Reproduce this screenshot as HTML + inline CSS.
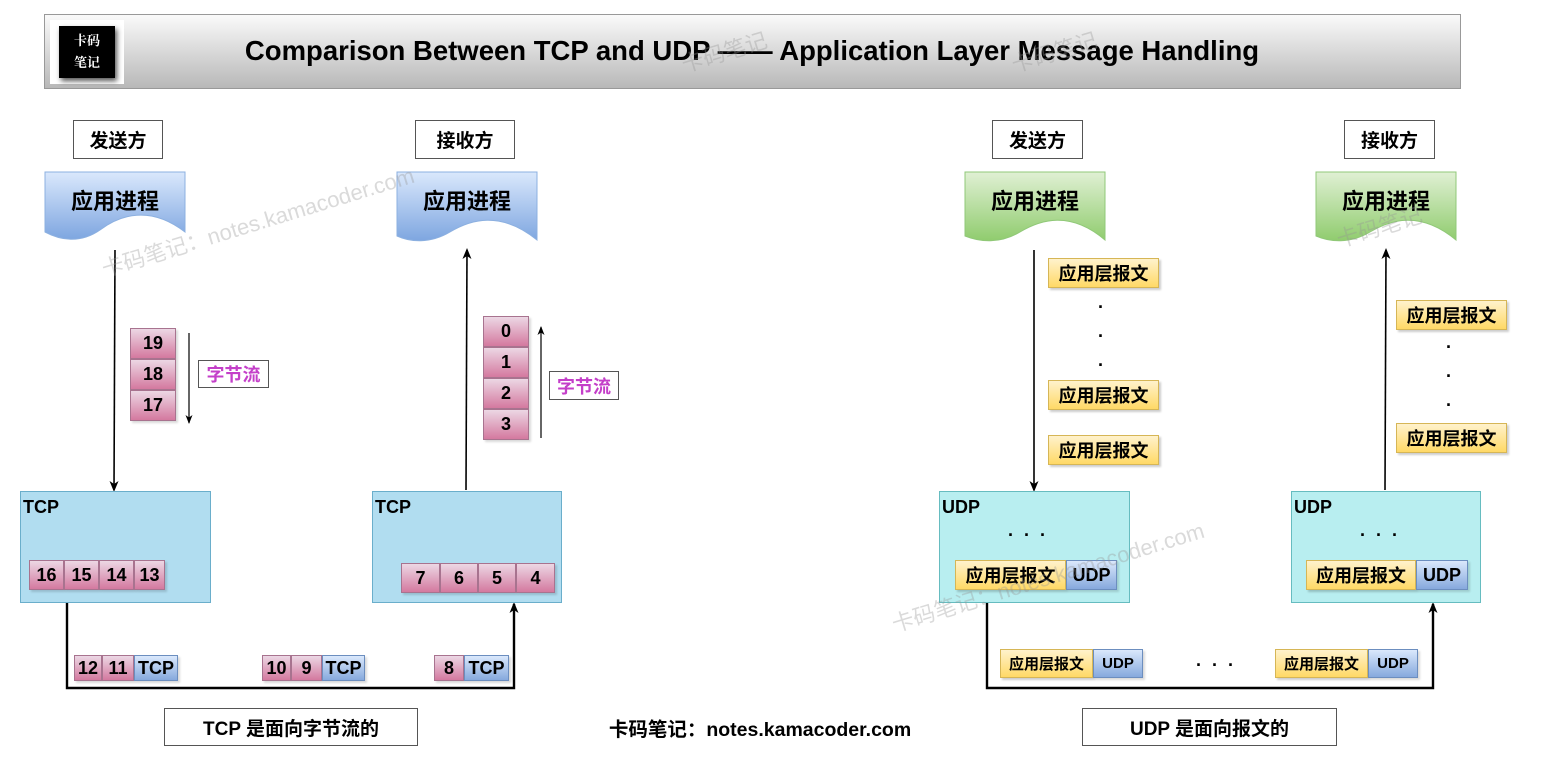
<!DOCTYPE html>
<html><head><meta charset="utf-8">
<style>
*{margin:0;padding:0;box-sizing:border-box}
body{width:1543px;height:761px;background:#fff;position:relative;overflow:hidden;font-family:"Liberation Sans","Noto Sans CJK SC",sans-serif;font-weight:bold;color:#000}
.a{position:absolute}
.lbl{position:absolute;border:1px solid #555;background:#fff;font-size:19px;display:flex;align-items:center;justify-content:center}
.c{position:absolute;display:flex;align-items:center;justify-content:center;font-size:18px}
.pk{background:linear-gradient(#ecd7e4,#d4799f);border:1px solid #a8738f;box-shadow:2px 2px 2px rgba(0,0,0,.15)}
.bl{background:linear-gradient(#dae8fc,#86a9dd);border:1px solid #6c8ebf;box-shadow:2px 2px 2px rgba(0,0,0,.15)}
.ye{background:linear-gradient(#fff2cc,#ffd966);border:1px solid #d6b656;box-shadow:2px 2px 2px rgba(0,0,0,.2)}
.tcp{position:absolute;background:#b1ddf0;border:1px solid #6aaecb}
.udp{position:absolute;background:#b8eef0;border:1px solid #66bcc0}
.box{font-size:18px;padding:5px 0 0 2px}
.wm{position:absolute;color:rgba(150,150,150,.35);font-size:22px;font-weight:normal;transform:rotate(-17deg);white-space:nowrap}
.dots{position:absolute;font-size:18px;letter-spacing:3px}
</style></head><body>

<div class="a" style="left:44px;top:14px;width:1417px;height:75px;background:linear-gradient(#fafafa,#b8b8b8);border:1px solid #999"></div>
<div class="a" style="left:50px;top:20px;width:74px;height:64px;background:#fff"></div>
<div class="a" style="left:59px;top:26px;width:56px;height:52px;background:#000;box-shadow:2px 3px 5px #555;color:#fff;font-family:'Noto Serif CJK SC',serif;font-size:13px;line-height:22px;text-align:center;padding-top:3px">卡码<br>笔记</div>
<div class="a" style="left:100px;top:35px;width:1304px;text-align:center;font-size:27.5px">Comparison Between TCP and UDP —— Application Layer Message Handling</div>

<div class="lbl" style="left:73px;top:120px;width:90px;height:39px">发送方</div>
<div class="lbl" style="left:415px;top:120px;width:100px;height:39px">接收方</div>
<div class="lbl" style="left:992px;top:120px;width:91px;height:39px">发送方</div>
<div class="lbl" style="left:1344px;top:120px;width:91px;height:39px">接收方</div>

<svg class="a" style="left:0;top:0" width="1543" height="761">
<defs>
<linearGradient id="gb" x1="0" y1="0" x2="0" y2="1"><stop offset="0" stop-color="#dae8fc"/><stop offset="1" stop-color="#7ea6e0"/></linearGradient>
<linearGradient id="gg" x1="0" y1="0" x2="0" y2="1"><stop offset="0" stop-color="#e0f0d4"/><stop offset="1" stop-color="#90cc6e"/></linearGradient>
<marker id="ar" markerUnits="userSpaceOnUse" markerWidth="12" markerHeight="12" refX="9" refY="6" orient="auto"><path d="M0,1.5 L11,6 L0,10.5 L3,6 z" fill="#000"/></marker>
<marker id="ar2" markerUnits="userSpaceOnUse" markerWidth="10" markerHeight="10" refX="8" refY="5" orient="auto"><path d="M0,1.5 L9,5 L0,8.5 L2.5,5 z" fill="#000"/></marker>
</defs>
<g stroke="#8cb0e0" stroke-width="1">
<path d="M45,172 H185 V232 C150,205 120,215 100,230 C80,244 60,240 45,232 Z" fill="url(#gb)"/>
<path d="M397,172 H537 V240 C500,210 470,220 450,232 C430,244 410,242 397,236 Z" fill="url(#gb)"/>
</g>
<g stroke="#90c878" stroke-width="1">
<path d="M965,172 H1105 V240 C1070,210 1040,220 1020,232 C1000,244 980,242 965,236 Z" fill="url(#gg)"/>
<path d="M1316,172 H1456 V240 C1420,210 1390,220 1370,232 C1350,244 1330,242 1316,236 Z" fill="url(#gg)"/>
</g>
<g stroke="#000" stroke-width="1.6" fill="none">
<line x1="115" y1="250" x2="114" y2="490" marker-end="url(#ar)"/>
<line x1="466" y1="490" x2="467" y2="250" marker-end="url(#ar)"/>
<line x1="1034" y1="250" x2="1034" y2="490" marker-end="url(#ar)"/>
<line x1="1385" y1="490" x2="1386" y2="250" marker-end="url(#ar)"/>
<path d="M67,602 V688 H514 V604" stroke-width="2.4" marker-end="url(#ar)"/>
<path d="M987,602 V688 H1433 V604" stroke-width="2.4" marker-end="url(#ar)"/>
</g>
<g stroke="#000" stroke-width="1.2">
<line x1="189" y1="333" x2="189" y2="423" marker-end="url(#ar2)"/>
<line x1="541" y1="438" x2="541" y2="327" marker-end="url(#ar2)"/>
</g>
</svg>

<div class="a" style="left:45px;top:184px;width:140px;text-align:center;font-size:22px">应用进程</div>
<div class="a" style="left:397px;top:184px;width:140px;text-align:center;font-size:22px">应用进程</div>
<div class="a" style="left:965px;top:184px;width:140px;text-align:center;font-size:22px">应用进程</div>
<div class="a" style="left:1316px;top:184px;width:140px;text-align:center;font-size:22px">应用进程</div>

<div class="c pk" style="left:130px;top:328px;width:46px;height:31px">19</div>
<div class="c pk" style="left:130px;top:359px;width:46px;height:31px">18</div>
<div class="c pk" style="left:130px;top:390px;width:46px;height:31px">17</div>
<div class="lbl" style="left:198px;top:360px;width:71px;height:28px;color:#c43fc9;font-size:18px">字节流</div>
<div class="c pk" style="left:483px;top:316px;width:46px;height:31px">0</div>
<div class="c pk" style="left:483px;top:347px;width:46px;height:31px">1</div>
<div class="c pk" style="left:483px;top:378px;width:46px;height:31px">2</div>
<div class="c pk" style="left:483px;top:409px;width:46px;height:31px">3</div>
<div class="lbl" style="left:549px;top:371px;width:70px;height:29px;color:#c43fc9;font-size:18px">字节流</div>

<div class="tcp box" style="left:20px;top:491px;width:191px;height:112px">TCP</div>
<div class="tcp box" style="left:372px;top:491px;width:190px;height:112px">TCP</div>
<div class="c pk" style="left:29px;top:560px;width:35px;height:30px">16</div>
<div class="c pk" style="left:64px;top:560px;width:35px;height:30px">15</div>
<div class="c pk" style="left:99px;top:560px;width:35px;height:30px">14</div>
<div class="c pk" style="left:134px;top:560px;width:31px;height:30px">13</div>
<div class="c pk" style="left:401px;top:563px;width:39px;height:30px">7</div>
<div class="c pk" style="left:440px;top:563px;width:38px;height:30px">6</div>
<div class="c pk" style="left:478px;top:563px;width:38px;height:30px">5</div>
<div class="c pk" style="left:516px;top:563px;width:39px;height:30px">4</div>

<div class="c pk" style="left:74px;top:655px;width:28px;height:26px">12</div>
<div class="c pk" style="left:102px;top:655px;width:32px;height:26px">11</div>
<div class="c bl" style="left:134px;top:655px;width:44px;height:26px">TCP</div>
<div class="c pk" style="left:262px;top:655px;width:29px;height:26px">10</div>
<div class="c pk" style="left:291px;top:655px;width:31px;height:26px">9</div>
<div class="c bl" style="left:322px;top:655px;width:43px;height:26px">TCP</div>
<div class="c pk" style="left:434px;top:655px;width:30px;height:26px">8</div>
<div class="c bl" style="left:464px;top:655px;width:45px;height:26px">TCP</div>

<div class="lbl" style="left:164px;top:708px;width:254px;height:38px">TCP 是面向字节流的</div>
<div class="a" style="left:570px;top:713px;width:380px;text-align:center;font-size:19.5px">卡码笔记：notes.kamacoder.com</div>
<div class="lbl" style="left:1082px;top:708px;width:255px;height:38px">UDP 是面向报文的</div>

<div class="c ye" style="left:1048px;top:258px;width:111px;height:30px">应用层报文</div>
<div class="dots" style="left:1098px;top:288px;line-height:29px;font-size:18px">.<br>.<br>.</div>
<div class="c ye" style="left:1048px;top:380px;width:111px;height:30px">应用层报文</div>
<div class="c ye" style="left:1048px;top:435px;width:111px;height:30px">应用层报文</div>
<div class="c ye" style="left:1396px;top:300px;width:111px;height:30px">应用层报文</div>
<div class="dots" style="left:1446px;top:328px;line-height:29px;font-size:18px">.<br>.<br>.</div>
<div class="c ye" style="left:1396px;top:423px;width:111px;height:30px">应用层报文</div>

<div class="udp box" style="left:939px;top:491px;width:191px;height:112px">UDP</div>
<div class="udp box" style="left:1291px;top:491px;width:190px;height:112px">UDP</div>
<div class="dots" style="left:1008px;top:520px">. . .</div>
<div class="dots" style="left:1360px;top:520px">. . .</div>
<div class="c ye" style="left:955px;top:560px;width:111px;height:30px">应用层报文</div>
<div class="c bl" style="left:1066px;top:560px;width:51px;height:30px">UDP</div>
<div class="c ye" style="left:1306px;top:560px;width:110px;height:30px">应用层报文</div>
<div class="c bl" style="left:1416px;top:560px;width:52px;height:30px">UDP</div>

<div class="c ye" style="left:1000px;top:649px;width:93px;height:29px;font-size:15px">应用层报文</div>
<div class="c bl" style="left:1093px;top:649px;width:50px;height:29px;font-size:15px">UDP</div>
<div class="dots" style="left:1196px;top:650px">. . .</div>
<div class="c ye" style="left:1275px;top:649px;width:93px;height:29px;font-size:15px">应用层报文</div>
<div class="c bl" style="left:1368px;top:649px;width:50px;height:29px;font-size:15px">UDP</div>

<div class="wm" style="left:95px;top:205px">卡码笔记：notes.kamacoder.com</div>
<div class="wm" style="left:885px;top:560px">卡码笔记：notes.kamacoder.com</div>
<div class="wm" style="left:680px;top:35px">卡码笔记</div>
<div class="wm" style="left:1010px;top:35px">卡码笔记</div>
<div class="wm" style="left:1335px;top:210px">卡码笔记</div>
</body></html>
